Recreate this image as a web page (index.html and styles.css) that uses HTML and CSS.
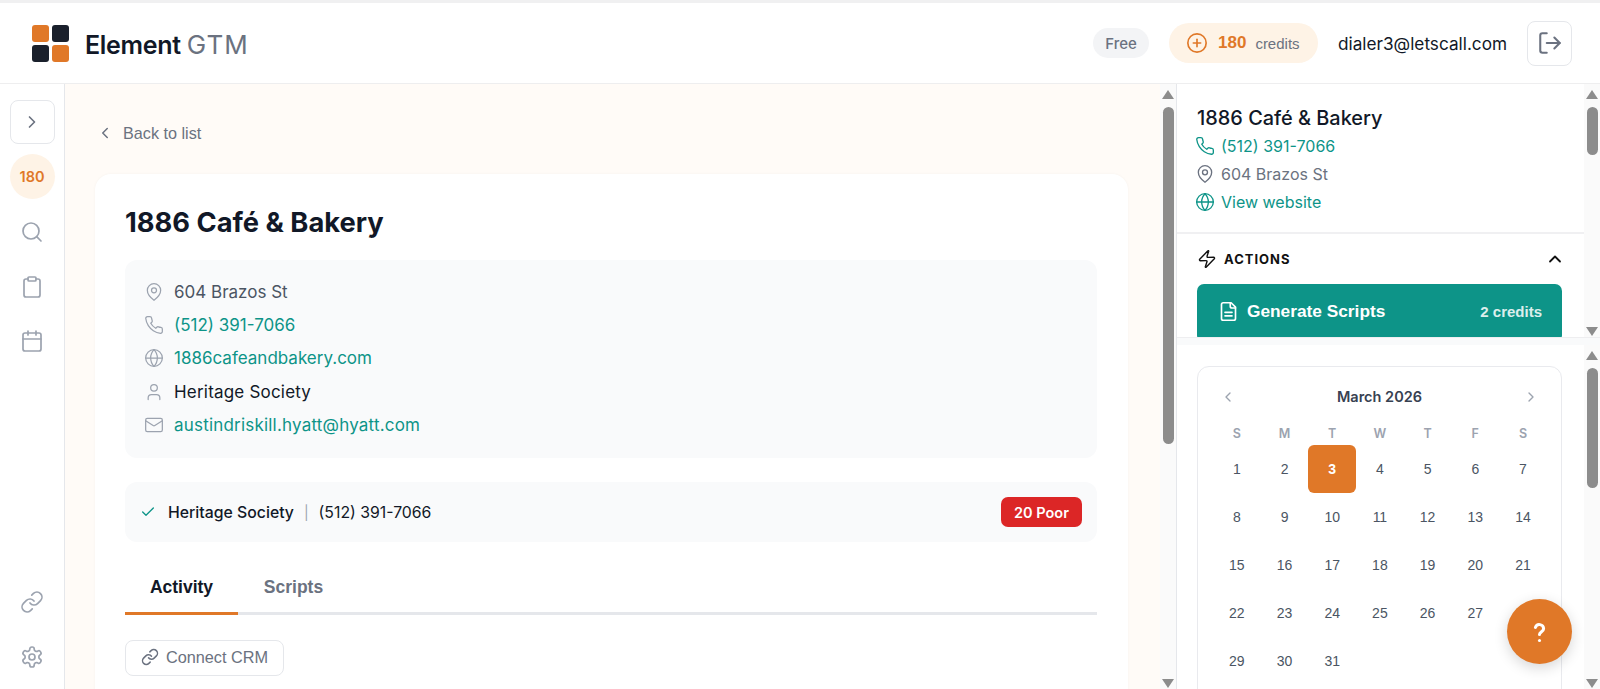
FILE: index.html
```html
<!DOCTYPE html>
<html lang="en">
<head>
<meta charset="utf-8">
<title>Element GTM</title>
<link rel="stylesheet" href="styles.css">
</head>
<body>
<svg class="sprite" aria-hidden="true">
  <symbol id="i-pin" viewBox="0 0 24 24"><path d="M20 10c0 6-8 12-8 12s-8-6-8-12a8 8 0 0 1 16 0Z"/><circle cx="12" cy="10" r="3"/></symbol>
  <symbol id="i-phone" viewBox="0 0 24 24"><path d="M22 16.92v3a2 2 0 0 1-2.18 2 19.79 19.79 0 0 1-8.63-3.07 19.5 19.5 0 0 1-6-6 19.79 19.79 0 0 1-3.07-8.67A2 2 0 0 1 4.11 2h3a2 2 0 0 1 2 1.72 12.84 12.84 0 0 0 .7 2.81 2 2 0 0 1-.45 2.11L8.09 9.91a16 16 0 0 0 6 6l1.27-1.27a2 2 0 0 1 2.11-.45 12.84 12.84 0 0 0 2.81.7A2 2 0 0 1 22 16.92z"/></symbol>
  <symbol id="i-globe" viewBox="0 0 24 24"><circle cx="12" cy="12" r="10"/><path d="M12 2a14.5 14.5 0 0 0 0 20 14.5 14.5 0 0 0 0-20"/><path d="M2 12h20"/></symbol>
  <symbol id="i-user" viewBox="0 0 24 24"><path d="M19 21v-2a4 4 0 0 0-4-4H9a4 4 0 0 0-4 4v2"/><circle cx="12" cy="7" r="4"/></symbol>
  <symbol id="i-mail" viewBox="0 0 24 24"><rect x="2" y="4" width="20" height="16" rx="2"/><path d="m22 7-8.97 5.7a1.94 1.94 0 0 1-2.06 0L2 7"/></symbol>
  <symbol id="i-search" viewBox="0 0 24 24"><circle cx="11" cy="11" r="8"/><path d="m21 21-4.3-4.3"/></symbol>
  <symbol id="i-clip" viewBox="0 0 24 24"><rect x="8" y="2" width="8" height="4" rx="1"/><path d="M16 4h2a2 2 0 0 1 2 2v14a2 2 0 0 1-2 2H6a2 2 0 0 1-2-2V6a2 2 0 0 1 2-2h2"/></symbol>
  <symbol id="i-cal" viewBox="0 0 24 24"><path d="M8 2v4"/><path d="M16 2v4"/><rect x="3" y="4" width="18" height="18" rx="2"/><path d="M3 10h18"/></symbol>
  <symbol id="i-link" viewBox="0 0 24 24"><path d="M10 13a5 5 0 0 0 7.54.54l3-3a5 5 0 0 0-7.07-7.07l-1.72 1.71"/><path d="M14 11a5 5 0 0 0-7.54-.54l-3 3a5 5 0 0 0 7.07 7.07l1.71-1.71"/></symbol>
  <symbol id="i-gear" viewBox="0 0 24 24"><path d="M12.22 2h-.44a2 2 0 0 0-2 2v.18a2 2 0 0 1-1 1.73l-.43.25a2 2 0 0 1-2 0l-.15-.08a2 2 0 0 0-2.73.73l-.22.38a2 2 0 0 0 .73 2.73l.15.1a2 2 0 0 1 1 1.72v.51a2 2 0 0 1-1 1.74l-.15.09a2 2 0 0 0-.73 2.73l.22.38a2 2 0 0 0 2.73.73l.15-.08a2 2 0 0 1 2 0l.43.25a2 2 0 0 1 1 1.73V20a2 2 0 0 0 2 2h.44a2 2 0 0 0 2-2v-.18a2 2 0 0 1 1-1.73l.43-.25a2 2 0 0 1 2 0l.15.08a2 2 0 0 0 2.73-.73l.22-.39a2 2 0 0 0-.73-2.73l-.15-.08a2 2 0 0 1-1-1.74v-.5a2 2 0 0 1 1-1.74l.15-.09a2 2 0 0 0 .73-2.73l-.22-.38a2 2 0 0 0-2.73-.73l-.15.08a2 2 0 0 1-2 0l-.43-.25a2 2 0 0 1-1-1.73V4a2 2 0 0 0-2-2z"/><circle cx="12" cy="12" r="3"/></symbol>
  <symbol id="i-zap" viewBox="0 0 24 24"><path d="M4 14a1 1 0 0 1-.78-1.63l9.9-10.2a.5.5 0 0 1 .86.46l-1.92 6.02A1 1 0 0 0 13 10h7a1 1 0 0 1 .78 1.63l-9.9 10.2a.5.5 0 0 1-.86-.46l1.92-6.02A1 1 0 0 0 11 14z"/></symbol>
  <symbol id="i-file" viewBox="0 0 24 24"><path d="M15 2H6a2 2 0 0 0-2 2v16a2 2 0 0 0 2 2h12a2 2 0 0 0 2-2V7Z"/><path d="M14 2v4a2 2 0 0 0 2 2h4"/><path d="M16 13H8"/><path d="M16 17H8"/></symbol>
  <symbol id="i-logout" viewBox="0 0 24 24"><path d="M9 21H5a2 2 0 0 1-2-2V5a2 2 0 0 1 2-2h4"/><path d="m16 17 5-5-5-5"/><path d="M21 12H9"/></symbol>
  <symbol id="i-plus" viewBox="0 0 24 24"><circle cx="12" cy="12" r="10"/><path d="M8 12h8"/><path d="M12 8v8"/></symbol>
  <symbol id="i-help" viewBox="0 0 24 24"><path d="M8.6 8.6a3.5 3.5 0 0 1 6.8 1.1c0 2.3-3.4 2.6-3.4 4.8"/><path d="M12 19.5h.01"/></symbol>
  <symbol id="i-right" viewBox="0 0 24 24"><path d="m9 18 6-6-6-6"/></symbol>
  <symbol id="i-left" viewBox="0 0 24 24"><path d="m15 18-6-6 6-6"/></symbol>
  <symbol id="i-up" viewBox="0 0 24 24"><path d="m18 15-6-6-6 6"/></symbol>
  <symbol id="i-check" viewBox="0 0 24 24"><path d="M20 6 9 17l-5-5"/></symbol>
</svg>

<header class="topbar">
  <div class="brand">
    <div class="logo"><span class="sq sq-o"></span><span class="sq sq-d"></span><span class="sq sq-d"></span><span class="sq sq-o"></span></div>
    <div class="brand-name">Element <span class="brand-sub">GTM</span></div>
  </div>
  <div class="account">
    <span class="plan">Free</span>
    <div class="credits">
      <svg class="ic ic-credit c-orange"><use href="#i-plus"/></svg>
      <span class="credits-num">180</span>
      <span class="credits-lbl">credits</span>
    </div>
    <span class="email">dialer3@letscall.com</span>
    <button class="logout"><svg class="ic ic-logout c-slate"><use href="#i-logout"/></svg></button>
  </div>
</header>

<div class="shell">
  <nav class="rail">
    <button class="rail-toggle"><svg class="ic ic-20 c-slate"><use href="#i-right"/></svg></button>
    <div class="rail-credits">180</div>
    <svg class="ic ic-24 c-grey rail-i1"><use href="#i-search"/></svg>
    <svg class="ic ic-24 c-grey rail-i2"><use href="#i-clip"/></svg>
    <svg class="ic ic-24 c-grey rail-i3"><use href="#i-cal"/></svg>
    <span class="rail-spacer"></span>
    <svg class="ic ic-24 c-grey rail-i4"><use href="#i-link"/></svg>
    <svg class="ic ic-24 c-grey rail-i5"><use href="#i-gear"/></svg>
  </nav>

  <main class="main">
    <div class="main-scroll">
      <a class="back"><svg class="ic ic-18 c-slate"><use href="#i-left"/></svg>Back to list</a>
      <section class="card">
        <h1 class="title">1886 Café &amp; Bakery</h1>
        <div class="info">
          <div class="info-row"><svg class="ic ic-info c-grey"><use href="#i-pin"/></svg><span class="t-body">604 Brazos St</span></div>
          <div class="info-row"><svg class="ic ic-info c-grey"><use href="#i-phone"/></svg><span class="t-teal">(512) 391-7066</span></div>
          <div class="info-row"><svg class="ic ic-info c-grey"><use href="#i-globe"/></svg><span class="t-teal">1886cafeandbakery.com</span></div>
          <div class="info-row"><svg class="ic ic-info c-grey"><use href="#i-user"/></svg><span class="t-dark t-wide">Heritage Society</span></div>
          <div class="info-row"><svg class="ic ic-info c-grey"><use href="#i-mail"/></svg><span class="t-teal t-wide">austindriskill.hyatt@hyatt.com</span></div>
        </div>
        <div class="contact">
          <svg class="ic ic-16 c-teal"><use href="#i-check"/></svg>
          <span class="t-dark contact-name">Heritage Society</span>
          <span class="sep">|</span>
          <span class="t-dark">(512) 391-7066</span>
          <span class="score">20 Poor</span>
        </div>
        <div class="tabs">
          <span class="tab tab-on">Activity</span>
          <span class="tab">Scripts</span>
        </div>
        <button class="crm"><svg class="ic ic-18 c-slate"><use href="#i-link"/></svg>Connect CRM</button>
      </section>
    </div>
    <div class="sbar">
      <i class="arrow arrow-up"></i><b class="thumb thumb-main"></b><i class="arrow arrow-down"></i>
    </div>
  </main>

  <aside class="side">
    <div class="pane pane-top">
      <div class="pane-body">
        <div class="biz">
          <h2 class="biz-name">1886 Café &amp; Bakery</h2>
          <div class="biz-row t-teal"><svg class="ic ic-biz c-teal"><use href="#i-phone"/></svg>(512) 391-7066</div>
          <div class="biz-row t-grey"><svg class="ic ic-biz c-slate"><use href="#i-pin"/></svg>604 Brazos St</div>
          <div class="biz-row t-teal"><svg class="ic ic-biz c-teal"><use href="#i-globe"/></svg>View website</div>
        </div>
        <div class="actions">
          <div class="actions-head">
            <svg class="ic ic-20 c-black ic-thin"><use href="#i-zap"/></svg>
            <span class="actions-lbl">ACTIONS</span>
            <svg class="ic ic-20 c-black actions-caret"><use href="#i-up"/></svg>
          </div>
          <button class="gen">
            <svg class="ic ic-file c-white"><use href="#i-file"/></svg>
            <span class="gen-lbl">Generate Scripts</span>
            <span class="gen-cost">2 credits</span>
          </button>
        </div>
      </div>
      <div class="sbar">
        <i class="arrow arrow-up"></i><b class="thumb thumb-top"></b><i class="arrow arrow-down"></i>
      </div>
    </div>
    <div class="pane pane-bottom">
      <div class="pane-body">
        <div class="calendar">
          <div class="cal-head">
            <svg class="ic ic-16 c-grey"><use href="#i-left"/></svg>
            <span class="cal-month">March 2026</span>
            <svg class="ic ic-16 c-grey"><use href="#i-right"/></svg>
          </div>
          <div class="cal-grid">
            <span class="dow">S</span><span class="dow">M</span><span class="dow">T</span><span class="dow">W</span><span class="dow">T</span><span class="dow">F</span><span class="dow">S</span>
            <span class="day">1</span><span class="day">2</span><span class="day day-on">3</span><span class="day">4</span><span class="day">5</span><span class="day">6</span><span class="day">7</span>
            <span class="day">8</span><span class="day">9</span><span class="day">10</span><span class="day">11</span><span class="day">12</span><span class="day">13</span><span class="day">14</span>
            <span class="day">15</span><span class="day">16</span><span class="day">17</span><span class="day">18</span><span class="day">19</span><span class="day">20</span><span class="day">21</span>
            <span class="day">22</span><span class="day">23</span><span class="day">24</span><span class="day">25</span><span class="day">26</span><span class="day">27</span><span class="day">28</span>
            <span class="day">29</span><span class="day">30</span><span class="day">31</span>
          </div>
        </div>
      </div>
      <div class="sbar">
        <i class="arrow arrow-up"></i><b class="thumb thumb-bottom"></b><i class="arrow arrow-down"></i>
      </div>
    </div>
  </aside>
</div>

<button class="fab"><svg class="ic ic-help c-white"><use href="#i-help"/></svg></button>
</body>
</html>
```

FILE: styles.css
```css
* { box-sizing: border-box; }
html, body { margin: 0; height: 689px; overflow: hidden; }
body {
  font-family: "Inter", "Noto Sans", sans-serif;
  background: #fff;
  color: #111827;
  border-top: 3px solid #f0f0f1;
  position: relative;
}
button { font: inherit; padding: 0; cursor: pointer; }
h1, h2 { margin: 0; }
.sprite { display: none; }

.ic { fill: none; stroke: currentColor; stroke-width: 2; stroke-linecap: round; stroke-linejoin: round; flex: none; display: block; }
.ic-16 { width: 16px; height: 16px; }
.ic-18 { width: 18px; height: 18px; }
.ic-20 { width: 20px; height: 20px; }
.ic-24 { width: 24px; height: 24px; stroke-width: 1.7; }
.ic-thin { stroke-width: 1.7; }
.ic-credit { width: 22px; height: 22px; stroke-width: 1.8; }
.ic-logout { width: 26px; height: 26px; stroke-width: 1.9; }
.ic-info { width: 20px; height: 20px; stroke-width: 1.5; }
.ic-biz { width: 20px; height: 20px; stroke-width: 1.6; margin-left: -2px; }
.ic-file { width: 21px; height: 21px; stroke-width: 1.9; }
.ic-help { width: 29px; height: 29px; stroke-width: 2.5; }
.c-orange { color: #e07828; }
.c-slate { color: #6b7280; }
.c-grey { color: #9ca3af; }
.c-teal { color: #0d9488; }
.c-black { color: #111; }
.c-white { color: #fff; }
.t-teal { color: #0d9488; }
.t-dark { color: #111827; }
.t-body { color: #4b5563; }
.t-grey { color: #6b7280; }
.t-wide { letter-spacing: .2px; }

/* top bar */
.topbar {
  height: 81px;
  display: flex;
  align-items: center;
  justify-content: space-between;
  padding: 0 28px 0 32px;
  border-bottom: 1px solid #eeeeef;
}
.brand { display: flex; align-items: center; gap: 16px; }
.logo { display: grid; grid-template-columns: 17px 17px; grid-auto-rows: 17px; gap: 3px; }
.sq { border-radius: 3px; }
.sq-o { background: #e07828; }
.sq-d { background: #1a202c; }
.brand-name { font-size: 25px; font-weight: 600; color: #111827; letter-spacing: -0.3px; padding-top: 2px; }
.brand-sub { font-size: 26px; font-weight: 400; color: #6b7280; letter-spacing: 1px; }
.account { display: flex; align-items: center; }
.plan {
  width: 56px; height: 30px; border-radius: 15px;
  background: #f3f4f6; color: #6b7280;
  font-size: 15px; font-weight: 500;
  display: flex; align-items: center; justify-content: center;
  margin-right: 20px;
}
.credits {
  width: 149px; height: 40px; border-radius: 20px;
  background: #fef3e6;
  display: flex; align-items: center;
  padding-left: 17px;
  margin-right: 20px;
}
.credits-num { font-family: "Liberation Sans", sans-serif; font-weight: 700; font-size: 17px; color: #e07828; margin-left: 10px; }
.credits-lbl { font-family: "Liberation Sans", sans-serif; font-size: 15px; color: #6b7280; margin-left: 9px; }
.email { font-size: 17.2px; color: #111827; width: 189px; }
.logout {
  width: 45px; height: 45px; border-radius: 8px;
  border: 1px solid #e5e7eb; background: #fff;
  display: flex; align-items: center; justify-content: center;
}

/* shell */
.shell { display: flex; height: 605px; }
.rail {
  width: 65px; flex: none;
  border-right: 1px solid #e5e7eb;
  display: flex; flex-direction: column; align-items: center;
  padding: 16px 0 20px;
  background: #fff;
}
.rail-toggle {
  width: 45px; height: 44px; border: 1px solid #e5e7eb; border-radius: 8px; background: #fff;
  display: flex; align-items: center; justify-content: center; flex: none;
}
.rail-credits {
  width: 45px; height: 45px; border-radius: 50%; flex: none;
  background: #fef3e6; color: #e07828;
  font-size: 14.5px; font-weight: 600;
  display: flex; align-items: center; justify-content: center;
  margin-top: 10px;
}
.rail-i1 { margin-top: 21px; }
.rail-i2 { margin-top: 31px; }
.rail-i3 { margin-top: 30px; }
.rail-spacer { flex: 1; }
.rail-i5 { margin-top: 31px; }

/* main */
.main { width: 1112px; flex: none; display: flex; background: #fffbf7; border-right: 1px solid #e5e7eb; overflow: hidden; }
.main-scroll { flex: 1; min-width: 0; padding: 0 32px 0 30px; }
.back {
  display: flex; align-items: center; gap: 9px;
  font-family: "Liberation Sans", sans-serif; font-size: 16.2px; color: #6b7280;
  margin-top: 39px; height: 20px; padding-left: 1px;
}
.card {
  margin-top: 31px;
  background: #fff;
  border-radius: 16px;
  padding: 31px 31px 40px 30px;
  box-shadow: 0 0 3px rgba(0,0,0,.04);
  height: 640px;
}
.title { font-size: 27.3px; font-weight: 700; color: #111827; line-height: 36px; }
.info {
  margin-top: 19px;
  background: #f9fafb;
  border-radius: 12px;
  height: 198px;
  padding: 15px 19px;
  display: flex; flex-direction: column;
}
.info-row { height: 33.3px; display: flex; align-items: center; gap: 10px; font-size: 17px; }
.contact {
  margin-top: 24px;
  height: 60px;
  background: #f9fafb;
  border-radius: 12px;
  display: flex; align-items: center;
  padding: 0 15px 0 15px;
  font-size: 15.8px;
}
.contact-name { margin-left: 12px; font-weight: 500; }
.sep { color: #9ca3af; margin: 0 10px; font-size: 14px; }
.score {
  margin-left: auto;
  width: 81px; height: 30px; border-radius: 7px;
  background: #dc2626; color: #fff;
  font-size: 14.5px; font-weight: 600;
  display: flex; align-items: center; justify-content: center;
}
.tabs { margin-top: 25px; display: flex; height: 48px; border-bottom: 3px solid #e5e7eb; }
.tab {
  width: 113px; height: 48px; flex: none;
  display: flex; align-items: center; justify-content: center;
  font-family: "Liberation Sans", sans-serif;
  font-size: 17.5px; font-weight: 700; color: #6b7280;
  border-bottom: 3px solid transparent;
  padding-bottom: 4px;
}
.tab + .tab { padding-right: 2px; }
.tab-on { color: #111827; border-bottom-color: #e07828; }
.crm {
  margin-top: 25px;
  width: 159px; height: 36px;
  background: #fff; border: 1px solid #e5e7eb; border-radius: 8px;
  display: flex; align-items: center; justify-content: center; gap: 7px;
  font-family: "Liberation Sans", sans-serif; font-size: 16.3px; color: #6b7280;
  padding-bottom: 2px;
}

/* scrollbars */
.sbar {
  width: 16px; flex: none;
  background: #fafafa;
  display: flex; flex-direction: column; align-items: center;
  padding: 6px 0 1px;
}
.arrow { display: block; width: 0; height: 0; border-left: 6px solid transparent; border-right: 6px solid transparent; flex: none; }
.arrow-up { border-bottom: 9px solid #8c8c8c; }
.arrow-down { border-top: 9px solid #8c8c8c; margin-top: auto; }
.thumb { display: block; width: 11px; background: #8c8c8c; border-radius: 6px; flex: none; margin-top: 8px; }
.thumb-main { height: 337px; }
.thumb-top { height: 48px; }
.thumb-bottom { height: 120px; }

/* right column */
.side { flex: 1; min-width: 0; display: flex; flex-direction: column; background: #f9fafb; }
.pane { display: flex; overflow: hidden; background: #fff; }
.pane-top { height: 254px; border-bottom: 1px solid #eeeef0; }
.pane-bottom { height: 344px; margin-top: 7px; }
.pane-body { flex: 1; min-width: 0; overflow: hidden; }
.biz { padding: 20px 20px 0; height: 150px; border-bottom: 2px solid #f0f0f2; }
.biz-name { font-size: 19.9px; font-weight: 500; color: #111827; line-height: 28px; height: 28px; }
.biz-row { height: 28px; display: flex; align-items: center; gap: 6px; font-size: 16px; }
.actions { padding: 0 20px; }
.actions-head { height: 50px; display: flex; align-items: center; gap: 7px; }
.actions-lbl { font-size: 13px; font-weight: 700; letter-spacing: 1px; color: #111; }
.actions-caret { margin-left: auto; margin-right: -1px; stroke-width: 2.2; }
.gen {
  width: 365px; height: 58px; border: 0; border-radius: 7px;
  background: #0d9488; color: #fff;
  display: flex; align-items: center;
  padding: 0 20px 4px 21px;
  font-family: "Liberation Sans", sans-serif;
}
.gen-lbl { font-size: 17.3px; font-weight: 700; margin-left: 8px; }
.gen-cost { font-size: 15px; font-weight: 700; margin-left: auto; opacity: .85; }
.pane-bottom .pane-body { padding: 21px 20px 0; }
.calendar { border: 1px solid #e9eaee; border-radius: 12px; width: 365px; height: 400px; padding: 0 15px; }
.cal-head { height: 54px; display: flex; align-items: center; justify-content: space-between; padding: 8px 7px 3px; }
.cal-month { font-size: 14.5px; font-weight: 600; color: #374151; }
.cal-grid { display: grid; grid-template-columns: repeat(7, 47.7px); grid-template-rows: 24px; grid-auto-rows: 48px; }
.dow { display: flex; align-items: center; justify-content: center; font-size: 12.5px; font-weight: 600; color: #9ca3af; }
.day {
  display: flex; align-items: center; justify-content: center;
  font-family: "Liberation Sans", sans-serif; font-size: 14px; color: #4b5563;
  border-radius: 6px;
}
.day-on { background: #e07828; color: #fff; font-weight: 700; }
.fab {
  position: absolute; left: 1507px; top: 596px;
  width: 65px; height: 65px; border-radius: 50%; border: 0;
  background: #e07828;
  box-shadow: 0 4px 14px rgba(0,0,0,.16);
  display: flex; align-items: center; justify-content: center;
}
```
